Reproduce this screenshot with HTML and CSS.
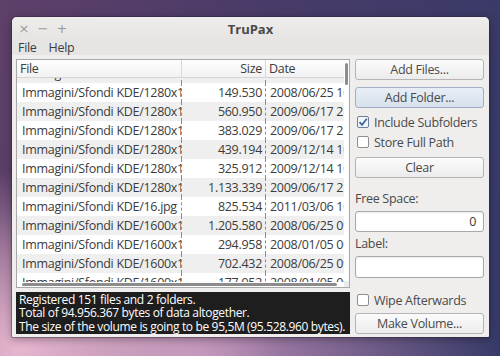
FILE: index.html
```html
<!DOCTYPE html>
<html>
<head>
<meta charset="utf-8">
<link rel="stylesheet" href="styles.css">
</head>
<body>
<div class="window">
  <div class="titlebar">
    <div class="wbtns"><span class="wb">×</span><span class="wb">−</span><span class="wb">+</span></div>
    <div class="title">TruPax</div>
  </div>
  <div class="menubar"><span class="menu">File</span><span class="menu">Help</span></div>
  <div class="content">
    <div class="left">
      <div class="table">
        <div class="tmain">
          <div class="thead">
            <div class="hc c1">File</div>
            <div class="hc c2">Size</div>
            <div class="hc c3">Date</div>
          </div>
          <div class="viewport">
            <div class="rows">
              <div class="row alt"><div class="c c1">Immagini/Sfondi KDE/1280x1024/ubuntu.jpg</div><div class="c c2">1.038.553</div><div class="c c3">2009/06/17 21:14:05</div></div>
              <div class="row"><div class="c c1">Immagini/Sfondi KDE/1280x1024/aurora.jpg</div><div class="c c2">149.530</div><div class="c c3">2008/06/25 10:22:14</div></div>
              <div class="row alt"><div class="c c1">Immagini/Sfondi KDE/1280x1024/blue.jpg</div><div class="c c2">560.950</div><div class="c c3">2009/06/17 21:14:05</div></div>
              <div class="row"><div class="c c1">Immagini/Sfondi KDE/1280x1024/curve.jpg</div><div class="c c2">383.029</div><div class="c c3">2009/06/17 21:14:05</div></div>
              <div class="row alt"><div class="c c1">Immagini/Sfondi KDE/1280x1024/dune.jpg</div><div class="c c2">439.194</div><div class="c c3">2009/12/14 10:02:31</div></div>
              <div class="row"><div class="c c1">Immagini/Sfondi KDE/1280x1024/field.jpg</div><div class="c c2">325.912</div><div class="c c3">2009/12/14 10:02:31</div></div>
              <div class="row alt"><div class="c c1">Immagini/Sfondi KDE/1280x1024/grass.jpg</div><div class="c c2">1.133.339</div><div class="c c3">2009/06/17 21:14:05</div></div>
              <div class="row"><div class="c c1">Immagini/Sfondi KDE/16.jpg</div><div class="c c2">825.534</div><div class="c c3">2011/03/06 10:40:12</div></div>
              <div class="row alt"><div class="c c1">Immagini/Sfondi KDE/1600x1200/aurora.jpg</div><div class="c c2">1.205.580</div><div class="c c3">2008/06/25 09:51:44</div></div>
              <div class="row"><div class="c c1">Immagini/Sfondi KDE/1600x1200/blue.jpg</div><div class="c c2">294.958</div><div class="c c3">2008/01/05 00:12:09</div></div>
              <div class="row alt"><div class="c c1">Immagini/Sfondi KDE/1600x1200/curve.jpg</div><div class="c c2">702.432</div><div class="c c3">2008/06/25 09:51:44</div></div>
              <div class="row"><div class="c c1">Immagini/Sfondi KDE/1600x1200/dune.jpg</div><div class="c c2">177.952</div><div class="c c3">2008/01/05 00:12:09</div></div>
            </div>
          </div>
          <div class="hbar"><div class="hthumb"></div></div>
        </div>
        <div class="vbar"><div class="vthumb"></div><div class="corner"></div></div>
      </div>
      <div class="status">
        <div>Registered 151 files and 2 folders.</div>
        <div>Total of 94.956.367 bytes of data altogether.</div>
        <div>The size of the volume is going to be 95,5M (95.528.960 bytes).</div>
      </div>
    </div>
    <div class="right">
      <div class="btn b-files">Add Files...</div>
      <div class="btn b-folder focus">Add Folder...</div>
      <div class="check c-inc"><span class="box checked"><svg width="10" height="10" viewBox="0 0 10 10"><path d="M1.5 5.2 L4 7.8 L8.8 1.8" fill="none" stroke="#3d6a9a" stroke-width="1.8"/></svg></span>Include Subfolders</div>
      <div class="check c-full"><span class="box"></span>Store Full Path</div>
      <div class="btn b-clear">Clear</div>
      <div class="lbl l-free">Free Space:</div>
      <div class="input in-free">0</div>
      <div class="lbl l-label">Label:</div>
      <div class="input in-label"></div>
      <div class="check c-wipe"><span class="box"></span>Wipe Afterwards</div>
      <div class="btn b-make">Make Volume...</div>
    </div>
  </div>
</div>
</body>
</html>
```
FILE: styles.css
```css
html, body {
  margin: 0;
  padding: 0;
  width: 500px;
  height: 356px;
  overflow: hidden;
}
body {
  font-family: "Open Sans", "Noto Sans", sans-serif;
  font-size: 12px;
  letter-spacing: -0.3px;
  color: #3c3c3c;
  background:
    radial-gradient(ellipse 260px 180px at 20px 350px, rgba(236, 186, 210, 0.95), rgba(236, 186, 210, 0) 100%),
    radial-gradient(ellipse 300px 200px at 200px 360px, rgba(210, 160, 200, 0.8), rgba(210, 160, 200, 0) 100%),
    linear-gradient(100deg, #5e4069 0%, #4a3b68 45%, #363a68 100%);
}
.window {
  margin: 17px 0 0 12px;
  width: 477px;
  height: 320px;
  background: #efeeed;
  border-radius: 5px 5px 1px 1px;
  box-shadow: 0 0 0 1px rgba(40, 30, 50, 0.35), 0 2px 8px rgba(0, 0, 0, 0.35);
  display: flex;
  flex-direction: column;
  overflow: hidden;
}
.titlebar {
  height: 22px;
  display: flex;
  align-items: center;
  position: relative;
  background: linear-gradient(#eeedec, #e6e5e4);
}
.wbtns {
  display: flex;
  padding-left: 6px;
  gap: 7px;
}
.wb {
  width: 12px;
  text-align: center;
  color: #9a9a9a;
  font-size: 13px;
  font-family: "DejaVu Sans", sans-serif;
  letter-spacing: 0;
}
.title {
  position: absolute;
  left: 0;
  right: 0;
  top: 3px;
  text-align: center;
  font-weight: bold;
  font-size: 13px;
  letter-spacing: 0;
  color: #4a4a4a;
}
.menubar {
  height: 16px;
  display: flex;
  align-items: center;
  gap: 12px;
  padding-left: 6px;
  background: #e6e5e4;
  font-size: 12.5px;
}
.content {
  display: flex;
  padding: 4px 5px 3px 4px;
  gap: 5px;
  flex: 1;
}
.left {
  width: 334px;
  display: flex;
  flex-direction: column;
  gap: 4px;
}
.table {
  height: 227px;
  border: 1px solid #a8a8a8;
  background: #fff;
  display: flex;
}
.tmain {
  width: 327px;
  display: flex;
  flex-direction: column;
}
.thead {
  height: 17px;
  display: flex;
  background: linear-gradient(#fdfdfd, #f2f2f2);
  border-bottom: 1px solid #d4d4d4;
  flex: none;
}
.hc {
  line-height: 17px;
  white-space: nowrap;
  overflow: hidden;
  font-size: 12.5px;
}
.thead .c1 { padding-left: 3px; border-right: 1px solid #d8d8d8; }
.thead .c2 { text-align: right; padding-right: 3px; border-right: 1px solid #d8d8d8; }
.thead .c3 { padding-left: 3px; }
.c1 { width: 165px; box-sizing: border-box; flex: none; }
.c2 { width: 84px; box-sizing: border-box; flex: none; }
.c3 { width: 78px; box-sizing: border-box; flex: none; }
.viewport {
  flex: 1;
  overflow: hidden;
}
.rows {
  margin-top: -14px;
}
.row {
  height: 19px;
  display: flex;
  background: #fff;
}
.row.alt { background: #efefef; }
.c {
  line-height: 19px;
  white-space: nowrap;
  overflow: hidden;
  font-size: 12.5px;
}
.row .c1 { padding-left: 5px; border-right: 1px dashed #8a8a8a; text-overflow: clip; }
.row .c2 { text-align: right; padding-right: 3px; border-right: 1px dashed #8a8a8a; }
.row .c3 { padding-left: 4px; }
.hbar {
  height: 5px;
  flex: none;
  background: #fff;
  display: flex;
  align-items: center;
  padding-left: 5px;
}
.hthumb {
  width: 315px;
  height: 3px;
  background: #8c8c8c;
  border-radius: 2px;
}
.vbar {
  width: 6px;
  display: flex;
  flex-direction: column;
  justify-content: space-between;
  background: #fff;
  padding-top: 3px;
}
.vthumb {
  width: 3px;
  height: 22px;
  background: #8c8c8c;
  border-radius: 2px;
  margin-left: 1px;
}
.corner {
  height: 6px;
  background: #ececec;
}
.status {
  height: 42px;
  background: #1e1e1e;
  color: #fff;
  font-size: 12px;
  letter-spacing: -0.35px;
  line-height: 13.4px;
  padding: 1px 0 0 3px;
  box-sizing: border-box;
  white-space: nowrap;
  overflow: hidden;
}
.right {
  width: 129px;
  display: flex;
  flex-direction: column;
}
.btn {
  height: 21px;
  box-sizing: border-box;
  border: 1px solid #b4b4b4;
  border-radius: 3px;
  background: linear-gradient(#fbfbfb, #ececec);
  text-align: center;
  line-height: 19px;
  font-size: 12.5px;
  color: #4a4a4a;
}
.btn.focus {
  background: linear-gradient(#e8eef5, #d7e1ec);
  border-color: #9fb0c4;
}
.b-folder { margin-top: 7px; }
.check {
  display: flex;
  align-items: center;
  height: 16px;
  padding-left: 2px;
  font-size: 12.5px;
  color: #4a4a4a;
}
.c-inc { margin-top: 6px; }
.c-full { margin-top: 4px; }
.box {
  width: 10px;
  height: 10px;
  border: 1px solid #8e8e8e;
  border-radius: 2px;
  background: #fff;
  margin-right: 5px;
  display: flex;
  align-items: center;
  justify-content: center;
}
.box.checked { border-color: #6a7f99; background: #f2f5f9; }
.b-clear { margin-top: 7px; }
.lbl {
  font-size: 12.5px;
  color: #4a4a4a;
  height: 16px;
  line-height: 16px;
}
.l-free { margin-top: 13px; }
.input {
  height: 21px;
  box-sizing: border-box;
  border: 1px solid #a8a8a8;
  border-radius: 3px;
  background: #fff;
  box-shadow: inset 0 1px 2px rgba(0, 0, 0, 0.08);
  text-align: right;
  padding-right: 7px;
  line-height: 19px;
  font-size: 12.5px;
}
.in-free { margin-top: 4px; }
.l-label { margin-top: 4px; }
.in-label { margin-top: 4px; height: 22px; }
.c-wipe { margin-top: 14px; }
.b-make { margin-top: 5px; }
```
